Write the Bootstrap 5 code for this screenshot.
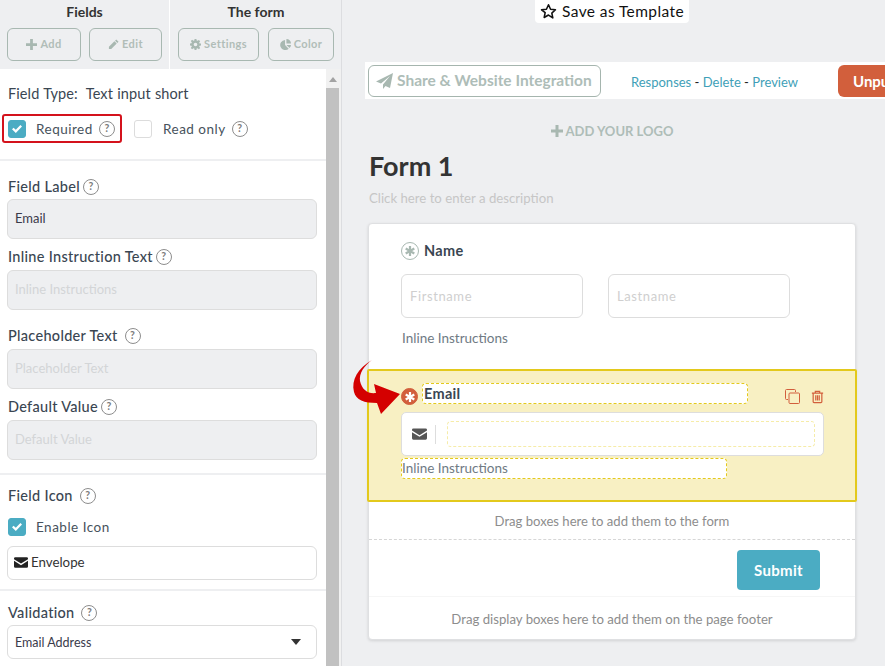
<!DOCTYPE html>
<html lang="en">
<head>
<meta charset="utf-8">
<title>Form editor</title>
<link rel="stylesheet" href="https://cdn.jsdelivr.net/npm/bootstrap@5.3.0/dist/css/bootstrap.min.css">
<style>
html,body{height:666px;overflow:hidden}
body{background:#eeeff1;font-family:"Lato","Liberation Sans",sans-serif;font-size:14px;color:#3a4652}
.app-shell{width:885px;height:666px;position:relative;overflow:hidden}
.side{width:342px;height:666px;flex:none;border-right:1px solid #dcdde0}
.side-head{height:69px;background:#eeeff1}
.head-a{width:170px;flex:none;padding:0 0 0 7px;border-right:1px solid #fff}
.head-b{flex:1;padding:0 0 0 8px}
.head-title{font-size:14px;font-weight:700;text-align:center;color:#333;height:28px;line-height:24px}
.head-a .head-title{width:155px}
.head-b .head-title{width:156px}
.tool-btn{height:33px;padding:0;font-size:11px;font-weight:700;letter-spacing:.4px;color:#b1bdb8;border:1px solid #a8b8b1;border-radius:6px;display:flex;align-items:center;justify-content:center;gap:3px;background:transparent;flex:none}
.tb-add{width:74px}.tb-edit{width:73px;margin-left:8px}.tb-set{width:81px}.tb-col{width:66px;margin-left:9px}
.tool-btn svg{width:11px;height:11px;fill:#a8b8b1}
.side-body{height:597px;overflow:hidden;background:#fff}
.side-scroll{width:326px;flex:none;overflow:hidden}
.fake-bar{width:15px;background:#f1f1f1;flex:none}
.fake-bar i{display:block;height:19px;position:relative}
.fake-bar i::after{content:"";position:absolute;left:3px;top:8px;border:4px solid transparent;border-top:0;border-bottom:5px solid #a3a3a3}
.fake-bar b{display:block;height:578px;width:13px;background:#c1c1c1}
.sect{border-bottom:2px solid #eeeff1;padding:0 8px}
.sect1{height:92px}
.sect2{height:314px}
.sect3{height:116px}
.type-row{padding-top:14px;height:45px;font-size:14.5px;letter-spacing:.1px;word-spacing:.4px}
.req-row{height:29px;margin-left:-6px;align-items:center}
.req-mark{width:120px;height:29px;border:2px solid #d4121c;border-radius:3px;padding-left:4px;display:flex;align-items:center;flex:none}
.chk{width:18px;height:18px;border-radius:3px;border:1px solid #dcdcdc;background:#fff;display:inline-flex;align-items:center;justify-content:center;flex:none}
.chk.on{background:#4bacc3;border-color:#4bacc3}
.chk svg{width:10px;height:8px;fill:#fff}
.chk-label{margin-left:10px;letter-spacing:.5px;font-size:13.5px;color:#47525c;padding-top:2px}
.ena-row .chk-label{padding-top:0}
.chk-gap{margin-left:12px}
.chk-gap + .chk-label{margin-left:11px}
.qm{width:16px;height:16px;border:1.5px solid #8d8d8d;border-radius:50%;font-size:10.5px;line-height:13px;text-align:center;color:#7c7c7c;display:inline-block;flex:none;font-weight:700}
.qm-a{margin-left:7px;margin-top:1px}
.chk-label + .qm-a{margin-left:6px}
.flabel{font-size:14.5px;letter-spacing:.3px;line-height:20px;color:#3a4652;display:flex;align-items:center;gap:3px;font-weight:500;white-space:nowrap}
.fl-1{height:38px;padding-top:13px}
.fl-2{height:25px;margin-top:6px;padding-bottom:2px}
.fl-3{height:39px;padding-top:12px}
.fl-4{height:31px;padding-top:4px}
.fl-5{height:43px;padding-bottom:1px}
.fl-6{height:34px;padding-top:10px}
.fbox.form-control{height:40px;margin:0 0 0 -1px;width:310px;border:1px solid #dddddd;border-radius:6px;background:#eeeff1;padding:0 7px;line-height:36px;font-size:13px;color:#3a3a4a}
.fbox.muted{color:#d3d5d7}
.fbox.white{background:#fff;height:34px;line-height:30px;color:#333;margin-top:10px;font-size:13.3px;gap:3px;padding:0 6px 2px}
.ena-row{height:18px}
.sel-box.form-select{width:310px;height:34px;margin-left:-1px;border:1px solid #dddddd;border-radius:6px;padding:1px 7px 0;font-size:12.5px;line-height:32px;background-image:none;color:#3a3a4a;position:relative}
.sel-box::after{content:"";position:absolute;right:15px;top:13px;border:5px solid transparent;border-bottom:0;border-top:6px solid #333}
.main-pane{flex:1;min-width:0;position:relative}
.tpl-wrap{display:flex;justify-content:center;margin-left:-3px;height:62px}
.tpl-tag{background:#fff;height:23px;border-radius:0 0 4px 4px;padding:0 5px;display:flex;gap:5px;align-items:center;color:#111;font-size:15.5px;letter-spacing:.4px}
.tpl-tag svg{width:17px;height:17px}
.tool-strip{margin-left:23px;height:37px;width:520px;background:#fff;display:flex;align-items:center;padding-left:3px;white-space:nowrap}
.share-btn{width:233px;flex:none;height:32px;border:1px solid #a5b5ae;border-radius:6px;color:#aebdb8;font-weight:700;font-size:15.5px;display:flex;align-items:center;padding:1px 0 0 7px;gap:4px;background:#fff}
.share-btn svg{width:17px;height:16px;fill:#a8b8b1}
.lnks{margin-left:30px;width:207px;flex:none;font-size:13px;color:#222;padding-top:4px}
.lnks a{color:#3f9fb8;text-decoration:none}
.unpub{width:47px;flex:none;height:32px;background:#d25f3c;border-radius:6px 0 0 6px;color:#fff;font-weight:700;font-size:15px;padding:5px 0 0 15px;overflow:hidden}
.logo-add{margin-left:26px;width:488px;color:#aebdb8;font-weight:700;font-size:13px;line-height:20px;margin-top:22px;height:32px;display:flex;justify-content:center;gap:3px;align-items:flex-start}
.logo-add svg{width:12px;height:12px;fill:#a8b8b1;margin-top:4px}
.form-name{margin:0 0 0 27px;font-size:27px;font-weight:700;color:#333;line-height:26px;height:26px}
.form-desc{margin:9px 0 0 27px;height:35px;line-height:20px;color:#c6c6c6;font-size:13.2px}
.form-sheet.card{margin-left:26px;width:488px;height:417px;border:1px solid #dfe0e2;border-radius:4px;box-shadow:0 1px 3px rgba(0,0,0,.12);background:#fff;position:relative}
.name-block{height:145px;padding:18px 0 0 32px}
.ast{width:18px;height:18px;border-radius:50%;border:1px solid #a8b8b1;display:inline-flex;align-items:center;justify-content:center;flex:none}
.ast svg{width:10px;height:10px;stroke:#a8b8b1;stroke-width:2.200}
.ast.hot{background:#d25f3c;border-color:#d25f3c;width:17px;height:17px;margin-top:5px}
.ast.hot svg{stroke:#fff}
.field-title{font-weight:700;font-size:14.5px;color:#3a4652;letter-spacing:.3px;margin-left:5px;line-height:18px}
.name-inputs{gap:25px;margin-top:14px}
.name-in.form-control{width:182px;height:44px;border:1px solid #dddddd;border-radius:6px;padding:0 8px;line-height:42px;color:#cfcfcf;font-size:13px;letter-spacing:.6px}
.inline-hint{margin:10px 0 0 1px;color:#6f7a84;font-size:13.5px;line-height:20px}
.hot-block{margin:0 -2px;height:133px;background:#f8f0c3;border:2px solid #e3c91c;border-radius:2px;padding:12px 0 0 32px;position:relative}
.title-dash{margin-left:4px;width:326px;height:21px;border:1px dashed #e3c91c;border-radius:4px;background:#fff;font-weight:700;font-size:14.5px;line-height:19px;padding-left:1px;letter-spacing:.3px;color:#3a4652}
.hot-acts{margin-left:37px;gap:11px;padding-top:6px}
.hot-acts svg{width:15px;height:15px;fill:none;stroke:#d25f3c}
.inp-wrap{margin-top:7px;width:423px;height:44px;border:1px solid #ddd;border-radius:5px;background:#fff;align-items:center}
.inp-wrap .env{width:15px;height:12px;margin-left:10px;fill:#555}
.inp-sep{width:1px;height:19px;background:#ddd;margin:0 11px 0 8px}
.inp-dash{width:368px;height:26px;border:1px dashed #f6eca8;border-radius:4px}
.hint-dash{margin-top:2px;width:326px;height:21px;border:1px dashed #e3c91c;border-radius:4px;background:#fff;color:#6f7a84;font-size:13.5px;line-height:19px}
.drop-note{text-align:center;color:#8d8d8d;font-size:13.1px;line-height:18px}
.drop-a{height:38px;padding-top:10px;border-bottom:1px dashed #d6d6d6}
.sub-row{height:57px;padding:10px 35px 0 0;justify-content:flex-end;border-bottom:1px solid #f6f6f6}
.sub-btn{width:83px;height:40px;padding:0;background:#4bacc3;border:0;border-radius:4px;color:#fff;font-weight:700;font-size:15px;letter-spacing:.3px}
.drop-b{padding-top:13px;font-size:13.2px}
.red-arrow{position:absolute;left:350px;top:358px;width:54px;height:60px;z-index:5}
</style>
</head>
<body>
<svg width="0" height="0" class="position-absolute">
<defs>
<symbol id="i-plus" viewBox="0 0 12 12"><path d="M4.500 0h3v4.500H12v3H7.500V12h-3V7.500H0v-3h4.500z"/></symbol>
<symbol id="i-env" viewBox="0 0 16 12"><path d="M1.500 0h13A1.500 1.500 0 0 1 16 1.500v.7L8 7.200 0 2.200v-.7A1.500 1.500 0 0 1 1.500 0zM0 4l8 5 8-5v6.500a1.500 1.500 0 0 1-1.500 1.500h-13A1.500 1.500 0 0 1 0 10.500z"/></symbol>
<symbol id="i-check" viewBox="0 0 10 8"><path d="M0 4.300 1.600 2.800l2.200 2L8.400 0 10 1.500 3.800 8z"/></symbol>
<symbol id="i-ast" viewBox="0 0 10 10"><path d="M5 0v10M.7 2.500l8.600 5M.7 7.500l8.600-5"/></symbol>
</defs>
</svg>
<div class="app-shell d-flex">
  <aside class="side d-flex flex-column">
    <div class="side-head d-flex">
      <div class="head-a">
        <div class="head-title">Fields</div>
        <div class="d-flex">
          <div class="btn tool-btn tb-add"><svg><use href="#i-plus"/></svg>Add</div>
          <div class="btn tool-btn tb-edit"><svg viewBox="0 0 12 12"><path d="M9 .5l2.500 2.500-1.300 1.300-2.500-2.500zM7 2.500 9.500 5l-6 6H1v-2.500z"/></svg>Edit</div>
        </div>
      </div>
      <div class="head-b">
        <div class="head-title">The form</div>
        <div class="d-flex">
          <div class="btn tool-btn tb-set"><svg viewBox="0 0 12 12"><path fill-rule="evenodd" d="M5 0h2l.3 1.600 1 .4L9.700 1l1.400 1.400L10 3.800l.4 1L12 5v2l-1.600.3-.4 1 1.100 1.400-1.400 1.400L8.300 10l-1 .4L7 12H5l-.3-1.600-1-.4-1.400 1.100L.9 9.700 2 8.300l-.4-1L0 7V5l1.600-.3.4-1L.9 2.300 2.300.9 3.700 2l1-.4zM6 4a2 2 0 1 0 0 4 2 2 0 0 0 0-4z"/></svg>Settings</div>
          <div class="btn tool-btn tb-col"><svg viewBox="0 0 12 12"><path d="M5.500 1v5.500l4 4A5.500 5.500 0 1 1 5.500 1zM7 0a5 5 0 0 1 5 5H7zM7 6.500h5a5.500 5.500 0 0 1-1.600 3.400z"/></svg>Color</div>
        </div>
      </div>
    </div>
    <div class="side-body d-flex">
      <div class="side-scroll">
        <div class="sect sect1">
          <div class="type-row">Field Type:&nbsp; Text input short</div>
          <div class="req-row d-flex">
            <div class="req-mark"><span class="chk on"><svg><use href="#i-check"/></svg></span><span class="chk-label">Required</span><span class="qm qm-a">?</span></div>
            <span class="chk chk-gap"></span><span class="chk-label">Read only</span><span class="qm qm-a">?</span>
          </div>
        </div>
        <div class="sect sect2">
          <div class="flabel fl-1">Field Label <span class="qm">?</span></div>
          <div class="form-control fbox">Email</div>
          <div class="flabel fl-2">Inline Instruction Text <span class="qm">?</span></div>
          <div class="form-control fbox muted">Inline Instructions</div>
          <div class="flabel fl-3">Placeholder Text <span class="qm ms-1">?</span></div>
          <div class="form-control fbox muted">Placeholder Text</div>
          <div class="flabel fl-4">Default Value <span class="qm">?</span></div>
          <div class="form-control fbox muted">Default Value</div>
        </div>
        <div class="sect sect3">
          <div class="flabel fl-5">Field Icon <span class="qm ms-1">?</span></div>
          <div class="d-flex align-items-center ena-row"><span class="chk on"><svg><use href="#i-check"/></svg></span><span class="chk-label">Enable Icon</span></div>
          <div class="form-control fbox white d-flex align-items-center"><svg width="14" height="11" fill="#222"><use href="#i-env"/></svg>Envelope</div>
        </div>
        <div class="sect border-0">
          <div class="flabel fl-6">Validation <span class="qm ms-1">?</span></div>
          <div class="form-select sel-box">Email Address</div>
        </div>
      </div>
      <div class="fake-bar"><i></i><b></b></div>
    </div>
  </aside>
  <main class="main-pane">
    <div class="tpl-wrap"><div class="tpl-tag"><svg viewBox="0 0 24 24" fill="none" stroke="#111" stroke-width="2.200" stroke-linejoin="round"><path d="M12 2.500l2.900 6.300 6.900.8-5.100 4.700 1.400 6.800L12 17l-6.100 3.400 1.400-6.800L2.200 9.600l6.900-.8z"/></svg>Save as Template</div></div>
    <div class="tool-strip">
      <div class="btn share-btn"><svg viewBox="0 0 17 16"><path d="M17 0 14 15 9.500 13 7 16v-4.500L14 3 5 10.500 0 8.500z"/></svg>Share &amp; Website Integration</div>
      <div class="lnks"><a href="#">Responses</a> - <a href="#">Delete</a> - <a href="#">Preview</a></div>
      <div class="unpub">Unpu</div>
    </div>
    <div class="logo-add"><svg><use href="#i-plus"/></svg>ADD YOUR LOGO</div>
    <h1 class="form-name">Form 1</h1>
    <p class="form-desc">Click here to enter a description</p>
    <div class="card form-sheet">
      <div class="name-block">
        <div class="d-flex align-items-center"><span class="ast"><svg><use href="#i-ast"/></svg></span><span class="field-title">Name</span></div>
        <div class="d-flex name-inputs"><div class="form-control name-in">Firstname</div><div class="form-control name-in">Lastname</div></div>
        <div class="inline-hint">Inline Instructions</div>
      </div>
      <div class="hot-block">
        <div class="d-flex">
          <span class="ast hot"><svg><use href="#i-ast"/></svg></span>
          <div class="title-dash">Email</div>
          <div class="d-flex hot-acts">
            <svg viewBox="0 0 15 15"><path d="M10.500 3V1.500a1 1 0 0 0-1-1h-8a1 1 0 0 0-1 1v8a1 1 0 0 0 1 1H3"/><rect x="4" y="4" width="10.500" height="10.500" rx="1"/></svg>
            <svg viewBox="0 0 15 15" style="width:13px"><path d="M1 3.500h13M5 3.500V1.500h5v2M2.500 3.500v10a1 1 0 0 0 1 1h8a1 1 0 0 0 1-1v-10M5.500 6v6M7.500 6v6M9.500 6v6" stroke-width="1.400"/></svg>
          </div>
        </div>
        <div class="d-flex inp-wrap"><svg class="env"><use href="#i-env"/></svg><span class="inp-sep"></span><div class="inp-dash"></div></div>
        <div class="hint-dash">Inline Instructions</div>
      </div>
      <div class="drop-note drop-a">Drag boxes here to add them to the form</div>
      <div class="d-flex sub-row"><button class="btn sub-btn" type="button">Submit</button></div>
      <div class="drop-note drop-b">Drag display boxes here to add them on the page footer</div>
    </div>
  </main>
  <svg class="red-arrow" viewBox="350 358 54 60"><path fill="#d40000" d="M372 360C358 368 351 380 354 392C356 400 364 403 377 403L381 414L400 394L374 384L376 393C368 394 362 390 360 381C359 373 364 366 372 360Z"/></svg>
</div>
</body>
</html>
